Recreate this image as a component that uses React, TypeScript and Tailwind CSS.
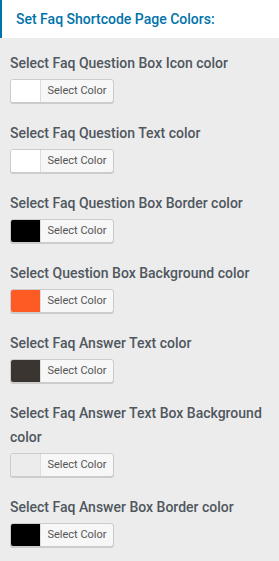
const fields = [
  { label: "Select Faq Question Box Icon color", color: "bg-white" },
  { label: "Select Faq Question Text color", color: "bg-white" },
  { label: "Select Faq Question Box Border color", color: "bg-black" },
  { label: "Select Question Box Background color", color: "bg-[#fe5a24]" },
  { label: "Select Faq Answer Text color", color: "bg-[#3a3531]" },
  { label: "Select Faq Answer Text Box Background color", color: "bg-[#ececec]" },
  { label: "Select Faq Answer Box Border color", color: "bg-black" },
];

function ColorButton({ color }: { color: string }) {
  return (
    <button className="flex h-6 w-[104px] items-stretch overflow-hidden rounded-[3px] border border-[#cccccc] bg-[#f7f7f7] shadow-[0_1px_0_#cccccc]">
      <span className={`w-[30px] border-r border-[#dddddd] ${color}`} />
      <span className="flex flex-1 items-center justify-center text-[11px] text-[#555555]">
        Select Color
      </span>
    </button>
  );
}

export default function App() {
  return (
    <div className="min-h-[561px] w-[279px] bg-[#ececec] font-['Roboto',sans-serif]">
      {/* header */}
      <div className="flex h-[38px] items-center border-l-2 border-[#0073aa] bg-white pl-[14px]">
        <h2 className="text-[14px] font-medium text-[#0073aa]">Set Faq Shortcode Page Colors:</h2>
      </div>

      <div className="flex flex-col gap-[18px] px-[10px] pt-[13px]">
        {fields.map((f) => (
          <div key={f.label} className="flex flex-col gap-1">
            <label className="text-[14px] font-medium leading-6 text-[#50575e]">{f.label}</label>
            <ColorButton color={f.color} />
          </div>
        ))}
      </div>
    </div>
  );
}
